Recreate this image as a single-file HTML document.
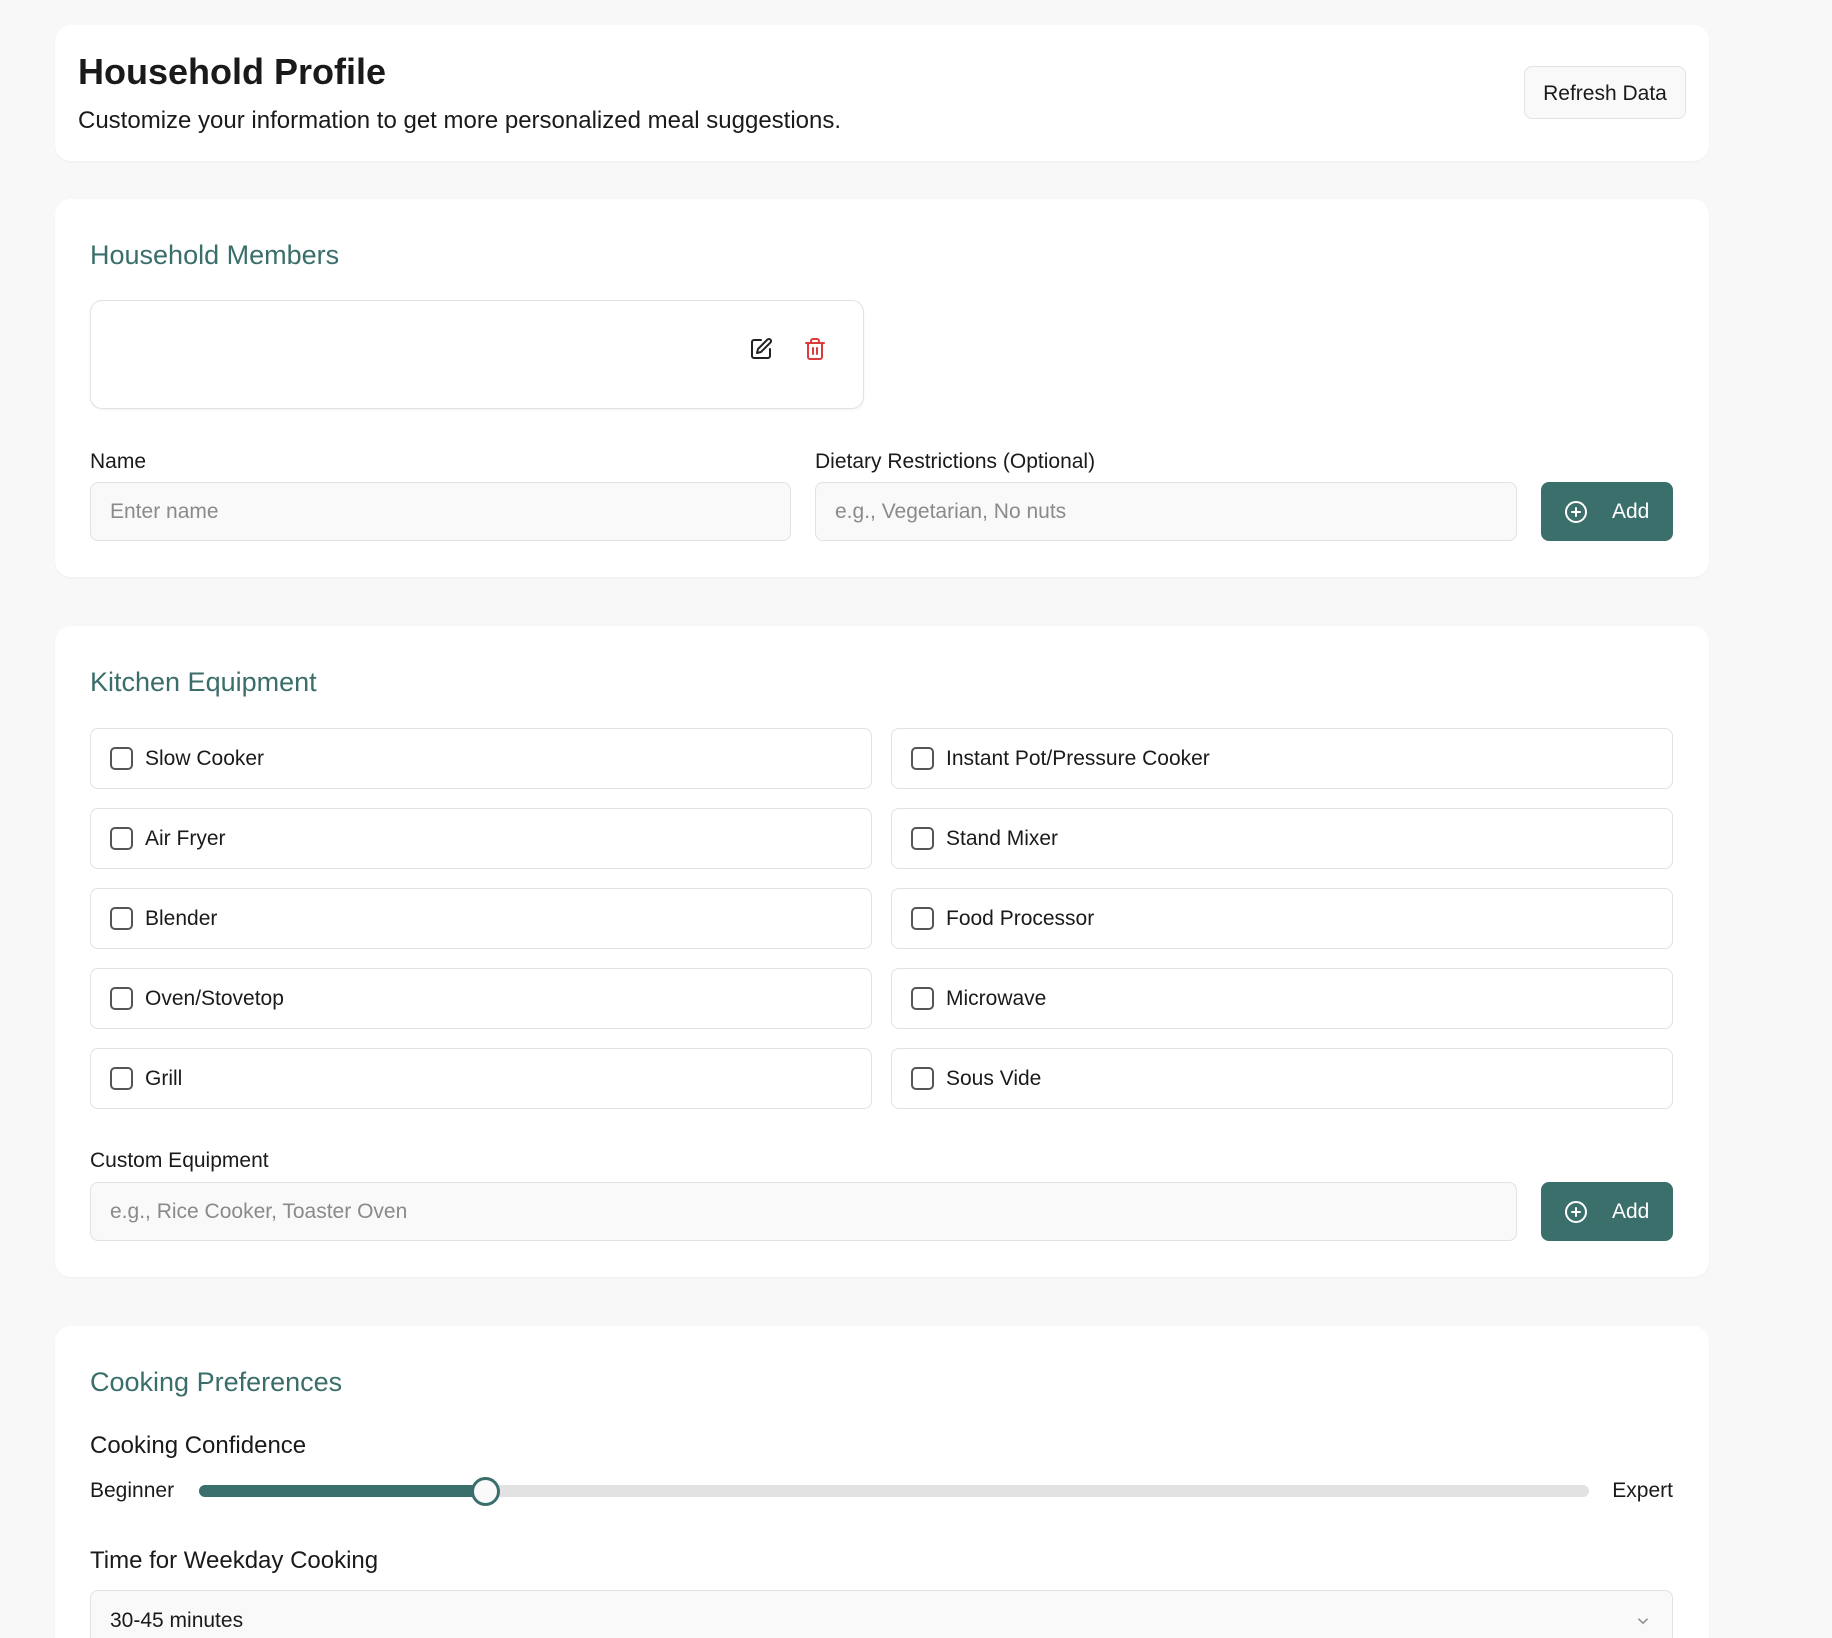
<!DOCTYPE html>
<html><head><meta charset="utf-8"><style>
*{box-sizing:border-box;margin:0;padding:0}
html{width:1832px;height:1638px;overflow:hidden}
body{width:1832px;height:1638px;overflow:hidden;background:#f8f8f8;font-family:"Liberation Sans",Arial,sans-serif;color:#1a1a1a;position:relative}
.card{position:absolute;left:55px;width:1654px;background:#fff;border-radius:16px;box-shadow:0 1px 2px rgba(0,0,0,0.04)}
.abs{position:absolute}
.h2{position:absolute;left:35px;font-size:27px;color:#3a6e6a;line-height:30px}
.lbl{position:absolute;font-size:21px;line-height:24px;color:#1a1a1a}
.inp{position:absolute;height:59px;background:#f9f9f9;border:1px solid #e2e2e2;border-radius:8px;font-size:21px;color:#8a8a8a;padding-left:19px;line-height:57px}
.btn{position:absolute;height:59px;width:132px;background:#3b6f6b;border-radius:8px;color:#fff;font-size:21px;line-height:59px}
.btn svg{position:absolute;left:23px;top:18px}
.btn span{position:absolute;left:71px}
.eq{position:absolute;width:782px;height:61px;border:1px solid #e2e2e2;border-radius:8px;background:#fff;font-size:21px;line-height:59px}
.eq i{position:absolute;left:19px;top:18px;width:23px;height:23px;border:2px solid #555;border-radius:5px}
.eq span{position:absolute;left:54px}
</style></head><body>

<div class="card" style="top:25px;height:136px">
  <div class="abs" style="left:23px;top:26px;font-size:36px;font-weight:bold;line-height:42px">Household Profile</div>
  <div class="abs" style="left:23px;top:82px;font-size:24px;line-height:28px">Customize your information to get more personalized meal suggestions.</div>
  <div class="abs" style="left:1469px;top:41px;width:162px;height:53px;border:1px solid #e2e2e2;border-radius:8px;background:#f9f9f9;font-size:21px;line-height:53px;text-align:center">Refresh Data</div>
</div>

<div class="card" style="top:199px;height:378px">
  <div class="h2" style="top:41px">Household Members</div>
  <div class="abs" style="left:35px;top:101px;width:774px;height:109px;border:1px solid #e2e2e2;border-radius:12px;box-shadow:0 1px 2px rgba(0,0,0,0.05)">
    <svg class="abs" style="left:658px;top:36px" width="24" height="24" viewBox="0 0 24 24" fill="none" stroke="#222" stroke-width="2" stroke-linecap="round" stroke-linejoin="round"><path d="M12 3H5a2 2 0 0 0-2 2v14a2 2 0 0 0 2 2h14a2 2 0 0 0 2-2v-7"/><path d="M18.4 2.6a2.1 2.1 0 0 1 3 3L12 15l-4 1 1-4z"/></svg>
    <svg class="abs" style="left:712px;top:36px" width="24" height="24" viewBox="0 0 24 24" fill="none" stroke="#dc3b3b" stroke-width="2" stroke-linecap="round" stroke-linejoin="round"><path d="M3 6h18"/><path d="M19 6v14a2 2 0 0 1-2 2H7a2 2 0 0 1-2-2V6"/><path d="M8 6V4a2 2 0 0 1 2-2h4a2 2 0 0 1 2 2v2"/><path d="M10 11v6M14 11v6"/></svg>
  </div>
  <div class="lbl" style="left:35px;top:251px">Name</div>
  <div class="lbl" style="left:760px;top:251px">Dietary Restrictions (Optional)</div>
  <div class="inp" style="left:35px;top:283px;width:701px">Enter name</div>
  <div class="inp" style="left:760px;top:283px;width:702px">e.g., Vegetarian, No nuts</div>
  <div class="btn" style="left:1486px;top:283px"><svg width="24" height="24" viewBox="0 0 24 24" fill="none" stroke="#fff" stroke-width="2" stroke-linecap="round"><circle cx="12" cy="12" r="10"/><path d="M8 12h8M12 8v8"/></svg><span>Add</span></div>
</div>

<div class="card" style="top:626px;height:651px">
  <div class="h2" style="top:41px">Kitchen Equipment</div>
  <div class="eq" style="left:35px;top:102px"><i></i><span>Slow Cooker</span></div>
  <div class="eq" style="left:836px;top:102px"><i></i><span>Instant Pot/Pressure Cooker</span></div>
  <div class="eq" style="left:35px;top:182px"><i></i><span>Air Fryer</span></div>
  <div class="eq" style="left:836px;top:182px"><i></i><span>Stand Mixer</span></div>
  <div class="eq" style="left:35px;top:262px"><i></i><span>Blender</span></div>
  <div class="eq" style="left:836px;top:262px"><i></i><span>Food Processor</span></div>
  <div class="eq" style="left:35px;top:342px"><i></i><span>Oven/Stovetop</span></div>
  <div class="eq" style="left:836px;top:342px"><i></i><span>Microwave</span></div>
  <div class="eq" style="left:35px;top:422px"><i></i><span>Grill</span></div>
  <div class="eq" style="left:836px;top:422px"><i></i><span>Sous Vide</span></div>
  <div class="lbl" style="left:35px;top:523px">Custom Equipment</div>
  <div class="inp" style="left:35px;top:556px;width:1427px">e.g., Rice Cooker, Toaster Oven</div>
  <div class="btn" style="left:1486px;top:556px"><svg width="24" height="24" viewBox="0 0 24 24" fill="none" stroke="#fff" stroke-width="2" stroke-linecap="round"><circle cx="12" cy="12" r="10"/><path d="M8 12h8M12 8v8"/></svg><span>Add</span></div>
</div>

<div class="card" style="top:1326px;height:312px;border-radius:16px 16px 0 0;overflow:hidden">
  <div class="h2" style="top:41px">Cooking Preferences</div>
  <div class="abs" style="left:35px;top:106px;font-size:24px;line-height:28px">Cooking Confidence</div>
  <div class="lbl" style="left:35px;top:153px">Beginner</div>
  <div class="abs" style="left:144px;top:159px;width:1390px;height:12px;background:#e2e2e2;border-radius:6px"></div>
  <div class="abs" style="left:144px;top:159px;width:290px;height:12px;background:#3b6f6b;border-radius:6px"></div>
  <div class="abs" style="left:416px;top:151px;width:29px;height:29px;background:#fafafa;border:3px solid #3b6f6b;border-radius:50%"></div>
  <div class="lbl" style="right:36px;top:153px">Expert</div>
  <div class="abs" style="left:35px;top:221px;font-size:24px;line-height:28px">Time for Weekday Cooking</div>
  <div class="abs" style="left:35px;top:264px;width:1583px;height:80px;background:#f9f9f9;border:1px solid #e2e2e2;border-radius:8px;font-size:21px;line-height:24px;padding:18px 0 0 19px">30-45 minutes
    <svg class="abs" style="right:20px;top:21px" width="18" height="18" viewBox="0 0 24 24" fill="none" stroke="#888" stroke-width="2"><path d="M6 9l6 6 6-6"/></svg>
  </div>
</div>
</body></html>
